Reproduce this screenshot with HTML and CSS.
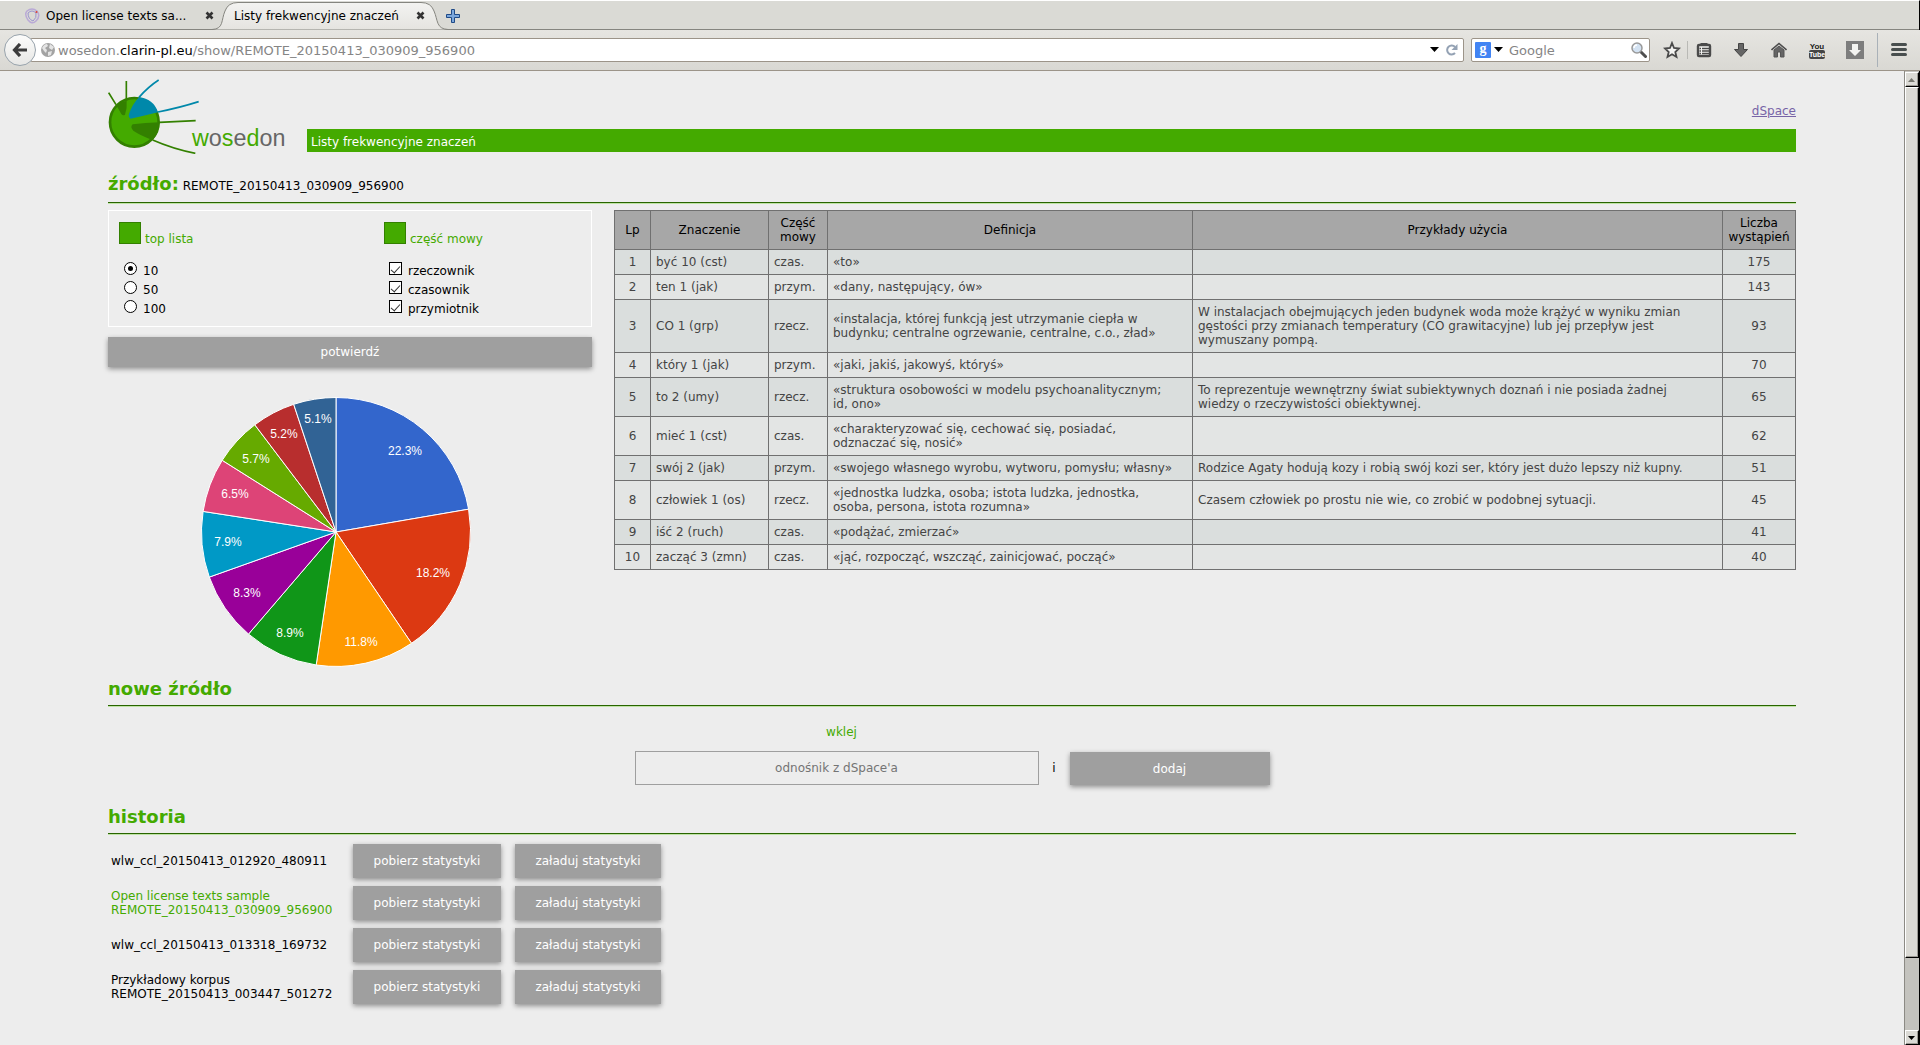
FILE: index.html
```html
<!DOCTYPE html>
<html lang="pl">
<head>
<meta charset="utf-8">
<title>Listy frekwencyjne znaczeń</title>
<link rel="stylesheet" href="styles.css">
</head>
<body>
<header class="browser">
  <div class="tabs">
    <div class="tab">
      <svg class="favicon" width="16" height="16" viewBox="0 0 16 16" fill="none"><path d="M3 3Q8-1 13 3Q17 8 12 13Q8 17 4 12Q0 6 3 3Z" stroke="#b9a9d6" stroke-width="1.5"/><path d="M4 5Q8 1 12 5Q13 10 9 13Q4 11 4 5Z" stroke="#9a94cf"/><circle cx="12.500" cy="4" r="1" fill="#d43"/></svg>
      <span class="tab-title">Open license texts sa...</span>
      <button class="tab-close" aria-label="Zamknij kartę"><svg width="9" height="9" viewBox="0 0 9 9"><path d="M1.500 1.500L7.500 7.500M7.500 1.500L1.500 7.500" stroke="#333" stroke-width="2.600"/></svg></button>
    </div>
    <div class="tab tab-active">
      <svg class="tab-shape" width="236" height="30" viewBox="0 0 236 30"><defs><linearGradient id="tab-fill" x1="0" y1="0" x2="0" y2="1"><stop offset="0" stop-color="#f3f3f1"/><stop offset="1" stop-color="#e5e4e0"/></linearGradient></defs><path d="M0 29.500C12 29 9 20 13 11Q16 2.500 26 2.500H209Q219 2.500 222 11C226 20 224 29 236 29.500" fill="url(#tab-fill)" stroke="#85857f"/></svg>
      <span class="tab-title">Listy frekwencyjne znaczeń</span>
      <button class="tab-close" aria-label="Zamknij kartę"><svg width="9" height="9" viewBox="0 0 9 9"><path d="M1.500 1.500L7.500 7.500M7.500 1.500L1.500 7.500" stroke="#333" stroke-width="2.600"/></svg></button>
    </div>
    <button class="new-tab" aria-label="Nowa karta"><svg width="14" height="14" viewBox="0 0 14 14"><path d="M5.500.500h3v5h5v3h-5v5h-3v-5h-5v-3h5z" fill="#7ba7dc" stroke="#1f4a87"/></svg></button>
  </div>
  <div class="toolbar">
    <button class="back" aria-label="Wstecz"><svg width="16" height="14" viewBox="0 0 16 14"><path d="M8 1L2.500 7L8 13M2.500 7H15" fill="none" stroke="#3c3c3c" stroke-width="3.200"/></svg></button>
    <div class="address">
      <svg width="14" height="14" viewBox="0 0 14 14"><circle cx="7" cy="7" r="7" fill="#a3a3a3"/><path d="M1 5Q3 1 6 1L7 3L4 5L6 7L5 10L3 8ZM9 1L13 4L11 7L8 5ZM7 9L11 8L10 12L7 13Z" fill="#e4e4e4"/></svg>
      <div class="url" role="textbox" aria-label="Adres" contenteditable="true" spellcheck="false">wosedon.<span class="domain">clarin-pl.eu</span>/show/REMOTE_20150413_030909_956900</div>
      <svg width="10" height="6" viewBox="0 0 10 6"><path d="M0 0H9L4.500 5Z"/></svg>
      <svg class="reload" width="12" height="12" viewBox="0 0 12 12"><path d="M9 9A4.500 4.500 0 1 1 9 3" fill="none" stroke="#94a2b4" stroke-width="2"/><path d="M11.500 0V6H5.500Z" fill="#94a2b4"/></svg>
    </div>
    <div class="search">
      <svg width="16" height="16" viewBox="0 0 16 16"><rect width="16" height="16" rx="1" fill="#4284f3"/><text x="8" y="11" text-anchor="middle" class="g-mark">g</text></svg>
      <svg width="10" height="6" viewBox="0 0 10 6"><path d="M0 0H9L4.500 5Z"/></svg>
      <input class="search-input" type="text" placeholder="Google" aria-label="Szukaj">
      <svg width="16" height="16" viewBox="0 0 16 16"><path d="M10 10L14.500 14.500" stroke="#4f4f4f" stroke-width="3" stroke-linecap="round"/><circle cx="6" cy="6" r="5" fill="#d3e2f2" stroke="#999" stroke-width="1.500"/><path d="M3 6Q3 3 6 3" fill="none" stroke="#fff" stroke-width="1.500"/></svg>
    </div>
    <div class="tools">
      <button aria-label="Zakładka"><svg width="18" height="18" viewBox="0 0 18 18"><path d="M9 2L11 7L16 7.500L12.300 11L13.500 16L9 13.300L4.500 16L5.700 11L2 7.500L7 7Z" fill="#f4f4f2" stroke="#4a4a4a" stroke-width="1.800"/></svg></button>
      <button class="divided" aria-label="Zakładki"><svg width="16" height="16" viewBox="0 0 16 16"><path d="M4.500 3V1H11.500V3" fill="#4a4a4a"/><rect x="2" y="3" width="12" height="11" rx="1" fill="#f4f4f2" stroke="#4a4a4a" stroke-width="2.400"/><path d="M3.500 6.500H5M6 6.500H13M3.500 9H5M6 9H13M3.500 11.500H5M6 11.500H13" stroke="#4a4a4a" stroke-width="1.300"/></svg></button>
      <button aria-label="Pobrane"><svg width="16" height="16" viewBox="0 0 16 16"><path d="M5.500 1.500H10.500V7.500H14.500L8 14.500L1.500 7.500H5.500Z" fill="#656565" stroke="#444"/></svg></button>
      <button aria-label="Strona startowa"><svg width="16" height="16" viewBox="0 0 16 16"><path d="M3 8L8 4L13 8V15H9.500V10H6.500V15H3Z" fill="#656565" stroke="#555"/><path d="M.500 8L8 1.500L15.500 8" fill="none" stroke="#4c4c4c" stroke-width="1.600"/></svg></button>
      <button aria-label="YouTube"><svg width="16" height="17" viewBox="0 0 16 17"><text x="8" y="7" text-anchor="middle" class="yt-top">You</text><rect y="8" width="16" height="9" rx="2" fill="#444"/><text x="8" y="15" text-anchor="middle" class="yt-bottom">Tube</text></svg></button>
      <button aria-label="Zapisz wideo"><svg width="18" height="18" viewBox="0 0 18 18"><rect width="18" height="18" fill="#7d7d7d"/><path d="M6 3H12V9H15L9 15L3 9H6Z" fill="#f3f3f1"/></svg></button>
      <button class="menu" aria-label="Menu"><svg width="16" height="14" viewBox="0 0 16 14"><path d="M1.500 1.500H14.500M1.500 6.500H14.500M1.500 11.500H14.500" stroke="#484e4e" stroke-width="3" stroke-linecap="round"/></svg></button>
    </div>
  </div>
</header>
<div class="viewport">
  <main class="page">
    <div class="masthead">
      <svg class="logo" viewBox="54 24 540 228" role="img" aria-label="wosedon">
        <circle cx="133" cy="157" r="73" fill="#44aa00" stroke="#338000" stroke-width="8"/>
        <path d="M78 104Q92 96 110 92Q112 115 105 134Q99 138 94 132Z" fill="#338000"/>
        <path d="M147 82Q190 86 204 127Q160 138 122 146Q114 142 117 132Q126 104 147 82Z" fill="#0088aa"/>
        <path d="M208 157Q208 186 188 210Q150 196 130 182Q119 171 128 163Q165 158 208 157Z" fill="#338000"/>
        <path d="M78 104L56 68M109 92V33M208 157L317 152M188 210Q250 237 316 250" fill="none" stroke="#338000" stroke-width="5"/>
        <path d="M147 82Q175 50 206 30M204 126Q270 113 326 95" fill="none" stroke="#0088aa" stroke-width="5"/>
        <text x="306" y="227" class="wordmark"><tspan class="lime">w</tspan>o<tspan class="lime">s</tspan>e<tspan class="lime">d</tspan>on</text>
      </svg>
      <div class="masthead-side">
        <a class="dspace" href="#dspace">dSpace</a>
        <h1 class="banner">Listy frekwencyjne znaczeń</h1>
      </div>
    </div>

    <h2 class="section-title">źródło:<span class="source-name"> REMOTE_20150413_030909_956900</span></h2>
    <div class="results">
      <form class="filters">
        <div class="filter-box">
          <div class="filter-group" role="radiogroup" aria-labelledby="top-lista">
            <div class="filter-head"><span class="swatch"></span><span id="top-lista">top lista</span></div>
            <label class="option"><input class="tick radio" type="radio" name="top" checked>10</label>
            <label class="option"><input class="tick radio" type="radio" name="top">50</label>
            <label class="option"><input class="tick radio" type="radio" name="top">100</label>
          </div>
          <div class="filter-group" role="group" aria-labelledby="czesc-mowy">
            <div class="filter-head"><span class="swatch"></span><span id="czesc-mowy">część mowy</span></div>
            <label class="option"><input class="tick check" type="checkbox" checked>rzeczownik</label>
            <label class="option"><input class="tick check" type="checkbox" checked>czasownik</label>
            <label class="option"><input class="tick check" type="checkbox" checked>przymiotnik</label>
          </div>
        </div>
        <button class="button confirm" type="button">potwierdź</button>
        <svg class="pie" width="270" height="270" viewBox="-135 -135 270 270" role="img" aria-label="Udział znaczeń">
          <g stroke="#ffffff" stroke-width="1">
            <path fill="#3366cc" d="M0 0V-134.500A134.500 134.500 0 0 1 132.600 -22.800Z"/>
            <path fill="#dc3912" d="M0 0L132.600 -22.800A134.500 134.500 0 0 1 75.500 111.300Z"/>
            <path fill="#ff9900" d="M0 0L75.500 111.300A134.500 134.500 0 0 1 -19.800 133Z"/>
            <path fill="#109618" d="M0 0L-19.800 133A134.500 134.500 0 0 1 -87.500 102.100Z"/>
            <path fill="#990099" d="M0 0L-87.500 102.100A134.500 134.500 0 0 1 -126.700 45.100Z"/>
            <path fill="#0099c6" d="M0 0L-126.700 45.100A134.500 134.500 0 0 1 -132.900 -20.600Z"/>
            <path fill="#dd4477" d="M0 0L-132.900 -20.600A134.500 134.500 0 0 1 -113.800 -71.700Z"/>
            <path fill="#66aa00" d="M0 0L-113.800 -71.700A134.500 134.500 0 0 1 -81.200 -107.200Z"/>
            <path fill="#b82e2e" d="M0 0L-81.200 -107.200A134.500 134.500 0 0 1 -42.300 -127.700Z"/>
            <path fill="#316395" d="M0 0L-42.300 -127.700A134.500 134.500 0 0 1 0 -134.500Z"/>
          </g>
          <g class="pie-labels">
            <text x="69" y="-77">22.3%</text><text x="97" y="45">18.2%</text><text x="25" y="114">11.8%</text><text x="-46" y="105">8.9%</text><text x="-89" y="65">8.3%</text><text x="-108" y="14">7.9%</text><text x="-101" y="-34">6.5%</text><text x="-80" y="-69">5.7%</text><text x="-52" y="-94">5.2%</text><text x="-18" y="-109">5.1%</text>
          </g>
        </svg>
      </form>
      <table class="senses">
        <colgroup><col class="col-lp"><col class="col-sense"><col class="col-pos"><col class="col-def"><col class="col-use"><col class="col-count"></colgroup>
        <thead><tr><th>Lp</th><th>Znaczenie</th><th>Część mowy</th><th>Definicja</th><th>Przykłady użycia</th><th>Liczba wystąpień</th></tr></thead>
        <tbody>
          <tr><td>1</td><td>być 10 (cst)</td><td>czas.</td><td class="prose">«to»</td><td class="prose"></td><td>175</td></tr>
          <tr><td>2</td><td>ten 1 (jak)</td><td>przym.</td><td class="prose">«dany, następujący, ów»</td><td class="prose"></td><td>143</td></tr>
          <tr><td>3</td><td>CO 1 (grp)</td><td>rzecz.</td><td class="prose">«instalacja, której funkcją jest utrzymanie ciepła w budynku; centralne ogrzewanie, centralne, c.o., zład»</td><td class="prose">W instalacjach obejmujących jeden budynek woda może krążyć w wyniku zmian gęstości przy zmianach temperatury (CO grawitacyjne) lub jej przepływ jest wymuszany pompą.</td><td>93</td></tr>
          <tr><td>4</td><td>który 1 (jak)</td><td>przym.</td><td class="prose">«jaki, jakiś, jakowyś, któryś»</td><td class="prose"></td><td>70</td></tr>
          <tr><td>5</td><td>to 2 (umy)</td><td>rzecz.</td><td class="prose">«struktura osobowości w modelu psychoanalitycznym; id, ono»</td><td class="prose">To reprezentuje wewnętrzny świat subiektywnych doznań i nie posiada żadnej wiedzy o rzeczywistości obiektywnej.</td><td>65</td></tr>
          <tr><td>6</td><td>mieć 1 (cst)</td><td>czas.</td><td class="prose">«charakteryzować się, cechować się, posiadać, odznaczać się, nosić»</td><td class="prose"></td><td>62</td></tr>
          <tr><td>7</td><td>swój 2 (jak)</td><td>przym.</td><td class="prose">«swojego własnego wyrobu, wytworu, pomysłu; własny»</td><td class="prose">Rodzice Agaty hodują kozy i robią swój kozi ser, który jest dużo lepszy niż kupny.</td><td>51</td></tr>
          <tr><td>8</td><td>człowiek 1 (os)</td><td>rzecz.</td><td class="prose">«jednostka ludzka, osoba; istota ludzka, jednostka, osoba, persona, istota rozumna»</td><td class="prose">Czasem człowiek po prostu nie wie, co zrobić w podobnej sytuacji.</td><td>45</td></tr>
          <tr><td>9</td><td>iść 2 (ruch)</td><td>czas.</td><td class="prose">«podążać, zmierzać»</td><td class="prose"></td><td>41</td></tr>
          <tr><td>10</td><td>zacząć 3 (zmn)</td><td>czas.</td><td class="prose">«jąć, rozpocząć, wszcząć, zainicjować, począć»</td><td class="prose"></td><td>40</td></tr>
        </tbody>
      </table>
    </div>

    <h2 class="section-title">nowe źródło</h2>
    <form class="new-source">
      <label class="paste-label" for="source-link">wklej</label>
      <input class="paste-input" id="source-link" type="text" placeholder="odnośnik z dSpace'a">
      <span class="and">i</span>
      <button class="button" type="button">dodaj</button>
    </form>

    <h2 class="section-title">historia</h2>
    <div class="history">
      <div class="history-name">wlw_ccl_20150413_012920_480911</div><button class="button">pobierz statystyki</button><button class="button">załaduj statystyki</button>
      <div class="history-name current">Open license texts sample<br>REMOTE_20150413_030909_956900</div><button class="button">pobierz statystyki</button><button class="button">załaduj statystyki</button>
      <div class="history-name">wlw_ccl_20150413_013318_169732</div><button class="button">pobierz statystyki</button><button class="button">załaduj statystyki</button>
      <div class="history-name">Przykładowy korpus<br>REMOTE_20150413_003447_501272</div><button class="button">pobierz statystyki</button><button class="button">załaduj statystyki</button>
    </div>
  </main>
  <div class="scrollbar" aria-hidden="true">
    <span class="arrow"><svg width="8" height="4" viewBox="0 0 8 4"><path d="M0 4H7L3.500 0Z" fill="#77776f"/></svg></span>
    <span class="thumb"></span>
    <span class="arrow"><svg width="8" height="4" viewBox="0 0 8 4"><path d="M0 0H7L3.500 4Z"/></svg></span>
  </div>
</div>
</body>
</html>
```
FILE: styles.css
```css
* { box-sizing: border-box; }

body {
  margin: 0;
  min-height: 100vh;
  display: flex;
  flex-direction: column;
  background: #ededed;
  color: #000;
  font: 12px/14px "DejaVu Sans", sans-serif;
}

button, input { font: inherit; }
svg { display: block; flex: none; }

/* Browser window */
.browser button {
  display: flex;
  align-items: center;
  justify-content: center;
  padding: 0;
  border: 0;
  background: none;
}
.tabs {
  display: flex;
  align-items: center;
  height: 30px;
  padding-left: 24px;
  background: #dadad5;
  border-top: 1px solid #fff;
  border-right: 1px solid #000;
  box-shadow: inset 0 -1px #85857f;
}
.tab {
  position: relative;
  display: flex;
  align-items: center;
  width: 210px;
  height: 30px;
}
.favicon { margin-right: 6px; }
.tab-title { position: relative; flex: 1; font-size: 12px; white-space: nowrap; }
.tab-close { position: relative; margin-right: 20px; }
.tab-active { width: 211px; }
.tab-shape { position: absolute; left: -22px; top: -1px; }
.new-tab { width: 14px; margin-left: 1px; }

.toolbar {
  display: flex;
  align-items: center;
  height: 41px;
  padding-left: 4px;
  background: linear-gradient(#e6e5e1, #d9d8d3);
  border-bottom: 1px solid #9c9489;
}
.browser .back {
  position: relative;
  width: 32px;
  height: 32px;
  border: 1px solid #98a3ac;
  border-radius: 50%;
  background: linear-gradient(#fcfcfb, #e7e7e5);
}
.address, .search {
  display: flex;
  align-items: center;
  height: 24px;
  border: 1px solid #9c9489;
  border-radius: 2px;
  background: #fff;
}
.address { flex: 1; margin-left: -6px; padding: 0 5px 0 10px; }
.url { flex: 1; margin-left: 3px; padding-top: 1px; color: #858585; font-size: 13px; line-height: 16px; white-space: nowrap; }
.domain { color: #000; }
.reload { margin-left: 6px; }
.search { width: 179px; margin-left: 7px; padding: 0 2px 0 3px; gap: 3px; }
.search-input { flex: 1; min-width: 0; padding: 1px 0 0 2px; border: 0; background: none; font-size: 13px; }
.search-input::placeholder { color: #858585; opacity: 1; }
.g-mark { font: bold 14px "Liberation Serif", serif; fill: #fff; }
.tools { display: flex; align-items: center; height: 40px; padding-left: 3px; }
.tools button { width: 38px; height: 30px; }
.tools .divided { border-left: 1px solid #b9b9b5; width: 32px; height: 18px; margin-left: -4px; margin-right: 3px; }
.tools .menu { width: 43px; height: 34px; margin-left: 3px; border-left: 1px solid #a9b1b8; }
.yt-top { font: bold 8px "Liberation Sans", sans-serif; fill: #222; }
.yt-bottom { font: bold 7px "Liberation Sans", sans-serif; fill: #fff; }

/* Page with its scrollbar */
.viewport { flex: 1; display: flex; }
.page { flex: 1; min-width: 0; padding: 7px 108px 24px; }
.scrollbar {
  display: flex;
  flex-direction: column;
  width: 16px;
  padding-top: 1px;
  border-left: 1px solid #8c8a84;
  border-right: 1px solid #000;
  background: #c4c3be;
}
.arrow, .thumb {
  border: 1px solid;
  border-color: #fff #000 #000 #fff;
  background: #dbdad5;
  box-shadow: inset -1px -1px #9c9a94;
}
.arrow { display: flex; align-items: center; justify-content: center; height: 15px; }
.thumb { flex: 0 1 871px; margin-bottom: auto; }

.masthead { display: flex; gap: 19px; }
.logo { width: 180px; height: 76px; }
.wordmark { font: 70px "Liberation Sans", sans-serif; fill: #666; }
.lime { fill: #44aa00; }
.masthead-side { flex: 1; display: flex; flex-direction: column; padding-top: 26px; gap: 11px; }
.dspace { align-self: flex-end; color: #7764a7; }
.banner { margin: 0; padding: 6px 4px 3px; background: #44aa00; color: #fff; font-size: 12px; font-weight: normal; line-height: 14px; }

.section-title {
  margin: 20px 0 0;
  padding-bottom: 4px;
  border-bottom: 1px solid #286400;
  box-shadow: 0 1px #bfe3a5;
  color: #44aa00;
  font-size: 18px;
  line-height: 24px;
}
.masthead + .section-title { margin-top: 18px; }
.source-name { color: #000; font-size: 12px; font-weight: normal; }

.button {
  padding: 0;
  border: 0;
  background: #9f9f9f;
  color: #fff;
  box-shadow: 0 2px 5px rgba(0, 0, 0, .4);
}

.results { display: flex; align-items: flex-start; gap: 22px; margin: 7px 0 -20px; }
.filters { display: flex; flex-direction: column; width: 484px; }
.filter-box { display: grid; grid-template-columns: 265px 1fr; height: 117px; padding: 11px 10px; border: 1px solid #fff; }
.filter-head { display: flex; align-items: flex-end; gap: 4px; margin-bottom: 17px; color: #44aa00; line-height: 10px; }
.swatch { width: 22px; height: 22px; background: #44aa00; border: 1px solid #338000; }
.option { display: flex; align-items: center; gap: 6px; height: 19px; padding-left: 5px; }
.tick {
  appearance: none;
  display: grid;
  place-items: center;
  width: 13px;
  height: 13px;
  margin: 0 0 4px;
  border: 1px solid #000;
  background: #fff;
}
.radio { border-radius: 50%; }
.radio:checked::before { content: ""; width: 5px; height: 5px; border-radius: 50%; background: #000; }
.check:checked::before { content: ""; width: 8px; height: 4px; border: solid #333; border-width: 0 0 1px 1px; transform: rotate(-48deg); }
.confirm { height: 30px; margin-top: 10px; }
.pie { align-self: center; margin: 30px 28px 10px 0; }
.pie-labels { font: 12px "Liberation Sans", sans-serif; fill: #fff; text-anchor: middle; }

.senses { flex: 1; table-layout: fixed; border-collapse: collapse; color: #444; }
.senses th, .senses td { height: 25px; padding: 5px; border: 1px solid #707070; }
.senses th { background: #a7a7a7; color: #000; font-weight: normal; padding: 5px 2px; }
.senses .prose { padding-right: 17px; }
.senses td:first-child, .senses td:last-child { text-align: center; }
.senses tbody tr:nth-child(odd) { background: #dadedd; }
.senses tbody tr:nth-child(even) { background: #e3e5e4; }
.col-lp { width: 36px; }
.col-sense { width: 118px; }
.col-pos { width: 59px; }
.col-def { width: 365px; }
.col-count { width: 73px; }

.new-source {
  display: grid;
  grid-template-columns: 404px 31px 200px;
  grid-template-rows: 14px 34px;
  row-gap: 12px;
  justify-content: center;
  margin-top: 19px;
}
.paste-label { grid-column: 1 / -1; width: 414px; text-align: center; color: #44aa00; }
.paste-input { border: 1px solid #9f9f9f; background: none; text-align: center; }
.paste-input::placeholder { color: #747474; opacity: 1; }
.and { align-self: center; text-align: center; }
.new-source .button { margin-top: 1px; }

.history { display: grid; grid-template-columns: 245px 148px 160px; grid-auto-rows: 34px; row-gap: 8px; margin-top: 10px; }
.history .button:nth-child(3n) { margin-left: 14px; }
.history-name { align-self: center; padding-left: 3px; }
.current { color: #44aa00; }
```
